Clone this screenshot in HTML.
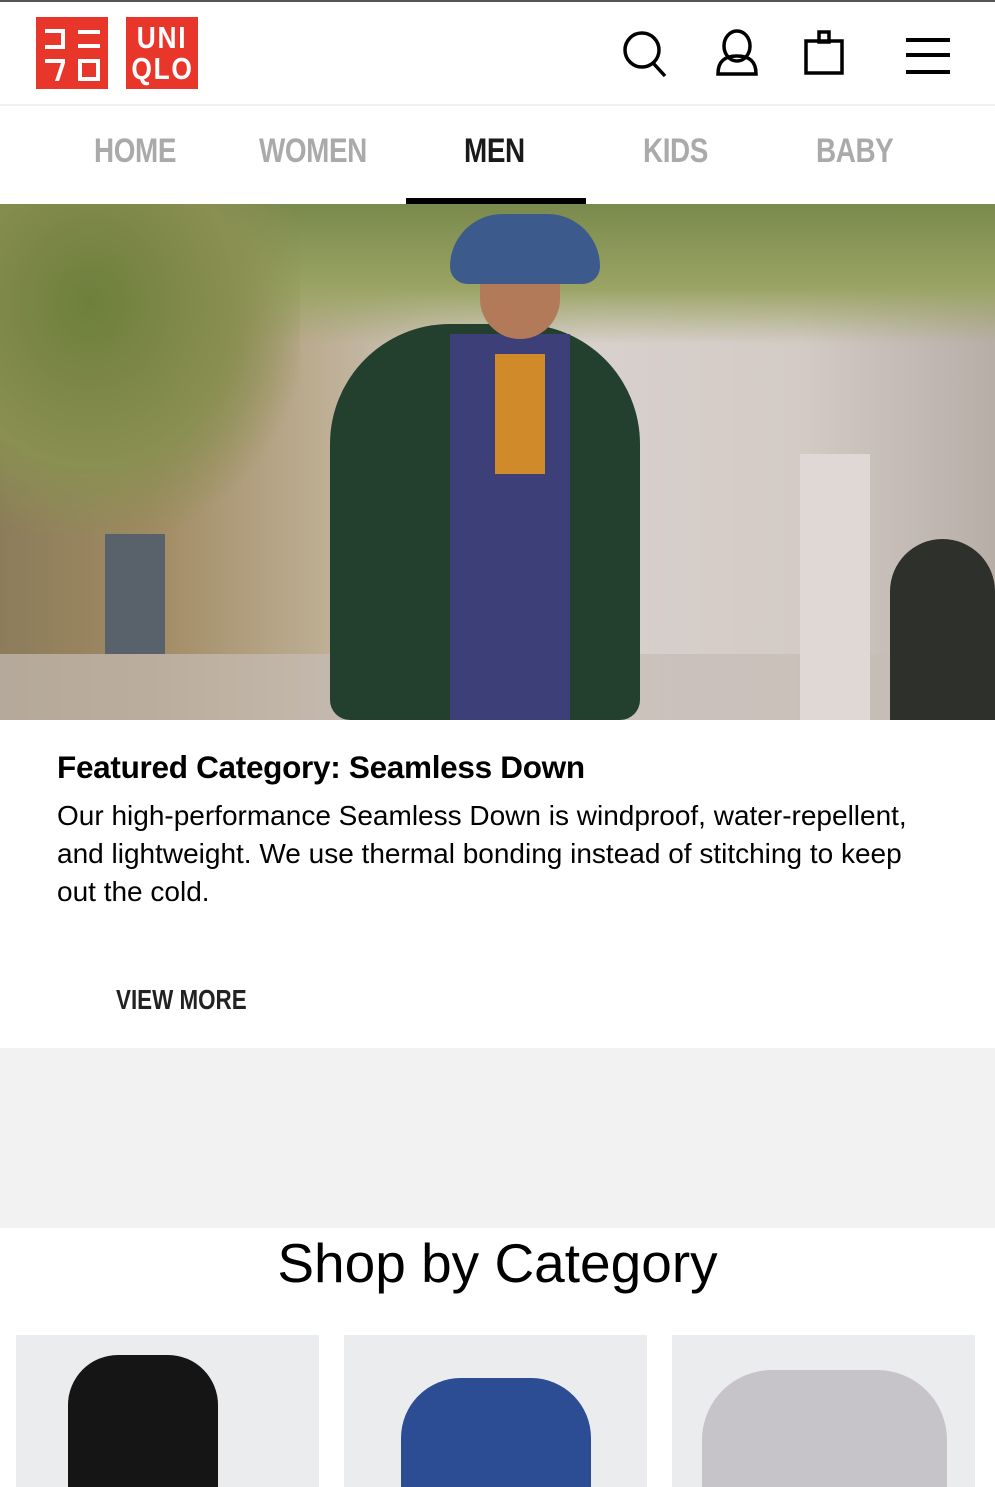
<!DOCTYPE html>
<html><head><meta charset="utf-8"><style>
*{margin:0;padding:0;box-sizing:border-box}
body{width:995px;height:1487px;overflow:hidden;background:#fff;font-family:"Liberation Sans",sans-serif;color:#000;position:relative}
.abs{position:absolute}
.nav span{position:absolute;top:132px;font-size:34px;font-weight:bold;color:#aaa;transform:scaleX(.82);transform-origin:left top;letter-spacing:-0.5px}
.logo{position:absolute;top:17px;width:72px;height:72px;background:#e8362a;color:#fff;font-weight:bold;font-family:"Liberation Sans",sans-serif;text-align:center}
</style></head><body>
<div class="abs" style="left:0;top:0;width:995px;height:2px;background:#555"></div>
<div class="logo" style="left:36px;padding-top:4px">
<svg width="72" height="64" viewBox="0 0 72 64"><g fill="#fff"><rect x="9" y="8" width="20" height="4"/><rect x="25" y="8" width="4" height="20"/><rect x="9" y="24" width="20" height="4"/><rect x="42" y="9" width="22" height="4"/><rect x="42" y="23" width="22" height="4"/><path d="M9 38h20v4l-6 18h-4l6-18H9z"/><rect x="44" y="40" width="18" height="18" fill="none" stroke="#fff" stroke-width="4"/></g></svg>
</div>
<div class="logo" style="left:126px;font-size:31px;line-height:31px;padding-top:5px;letter-spacing:2px"><div style="transform:scaleX(.85)">UNI<br>QLO</div></div>
<svg class="abs" style="left:620px;top:28px" width="340" height="52" viewBox="0 0 340 52">
<g fill="none" stroke="#000" stroke-width="3.5">
<circle cx="22" cy="22" r="17"/><path d="M34 36l11 12"/>
<ellipse cx="117" cy="18" rx="13" ry="15"/><path d="M98 46c0-14 8-18 19-18s19 4 19 18z"/>
<rect x="186" y="13" width="36" height="32"/><rect x="199" y="4" width="10" height="10"/>
</g>
<g fill="#000"><rect x="286" y="10" width="44" height="4"/><rect x="286" y="25" width="44" height="4"/><rect x="286" y="42" width="44" height="4"/></g>
</svg>
<div class="abs" style="left:0;top:104px;width:995px;height:2px;background:#f1f1f1"></div>
<div class="nav">
<span style="left:94px">HOME</span><span style="left:259px">WOMEN</span><span style="left:464px;color:#1a1a1a">MEN</span><span style="left:643px">KIDS</span><span style="left:816px">BABY</span>
</div>
<div class="abs" style="left:406px;top:198px;width:180px;height:6px;background:#000"></div>
<div class="abs" style="left:0;top:204px;width:995px;height:516px;overflow:hidden;background:linear-gradient(90deg,#8c7c5a 0%,#a08a62 15%,#b9a98c 30%,#cfc6bc 45%,#d8d0cc 60%,#d4cbc6 80%,#b8aea8 100%)">
<div class="abs" style="left:0;top:0;width:995px;height:140px;background:linear-gradient(180deg,#7a8a4c,#9aa464 60%,rgba(180,170,140,0))"></div>
<div class="abs" style="left:0;top:0;width:300px;height:330px;background:radial-gradient(ellipse at 30% 30%,#6e7f3c,#8a8f52 50%,rgba(140,124,90,0) 75%)"></div>
<div class="abs" style="left:105px;top:330px;width:60px;height:120px;background:#59626a"></div>
<div class="abs" style="left:0;top:450px;width:995px;height:66px;background:#c6bcb6;opacity:.7"></div>
<div class="abs" style="left:800px;top:250px;width:70px;height:266px;background:#e0d8d4"></div>
<div class="abs" style="left:890px;top:335px;width:105px;height:181px;border-radius:60px 60px 0 0;background:#2e302c"></div>
<div class="abs" style="left:330px;top:120px;width:310px;height:396px;border-radius:120px 120px 20px 20px;background:#23402f"></div>
<div class="abs" style="left:450px;top:130px;width:120px;height:386px;background:#3c3f78"></div>
<div class="abs" style="left:495px;top:150px;width:50px;height:120px;background:#d08a2a"></div>
<div class="abs" style="left:480px;top:40px;width:80px;height:95px;border-radius:40px;background:#b27a58"></div>
<div class="abs" style="left:450px;top:10px;width:150px;height:70px;border-radius:60px 60px 20px 20px;background:#3d5a8c"></div>
</div>
<div class="abs" style="left:57px;top:749px;font-size:31.5px;font-weight:bold;letter-spacing:-0.3px">Featured Category: Seamless Down</div>
<div class="abs" style="left:57px;top:797px;width:880px;font-size:28px;line-height:38px">Our high-performance Seamless Down is windproof, water-repellent, and lightweight. We use thermal bonding instead of stitching to keep out the cold.</div>
<div class="abs" style="left:116px;top:984px;font-size:28px;font-weight:bold;color:#222;transform:scaleX(.8);transform-origin:left top">VIEW MORE</div>
<div class="abs" style="left:0;top:1048px;width:995px;height:180px;background:#f2f2f2"></div>
<div class="abs" style="left:0;top:1232px;width:995px;text-align:center;font-size:55px;line-height:62px">Shop by Category</div>
<div class="abs" style="left:16px;top:1335px;width:303px;height:152px;background:#ebecee;overflow:hidden">
<div class="abs" style="left:52px;top:20px;width:150px;height:160px;border-radius:50px 50px 0 0;background:#151515"></div></div>
<div class="abs" style="left:344px;top:1335px;width:303px;height:152px;background:#ebecee;overflow:hidden">
<div class="abs" style="left:57px;top:43px;width:190px;height:160px;border-radius:60px 60px 0 0;background:#2c4c94"></div></div>
<div class="abs" style="left:672px;top:1335px;width:303px;height:152px;background:#ebecee;overflow:hidden">
<div class="abs" style="left:30px;top:35px;width:245px;height:160px;border-radius:70px 70px 0 0;background:#c6c3c9"></div></div>
</body></html>
